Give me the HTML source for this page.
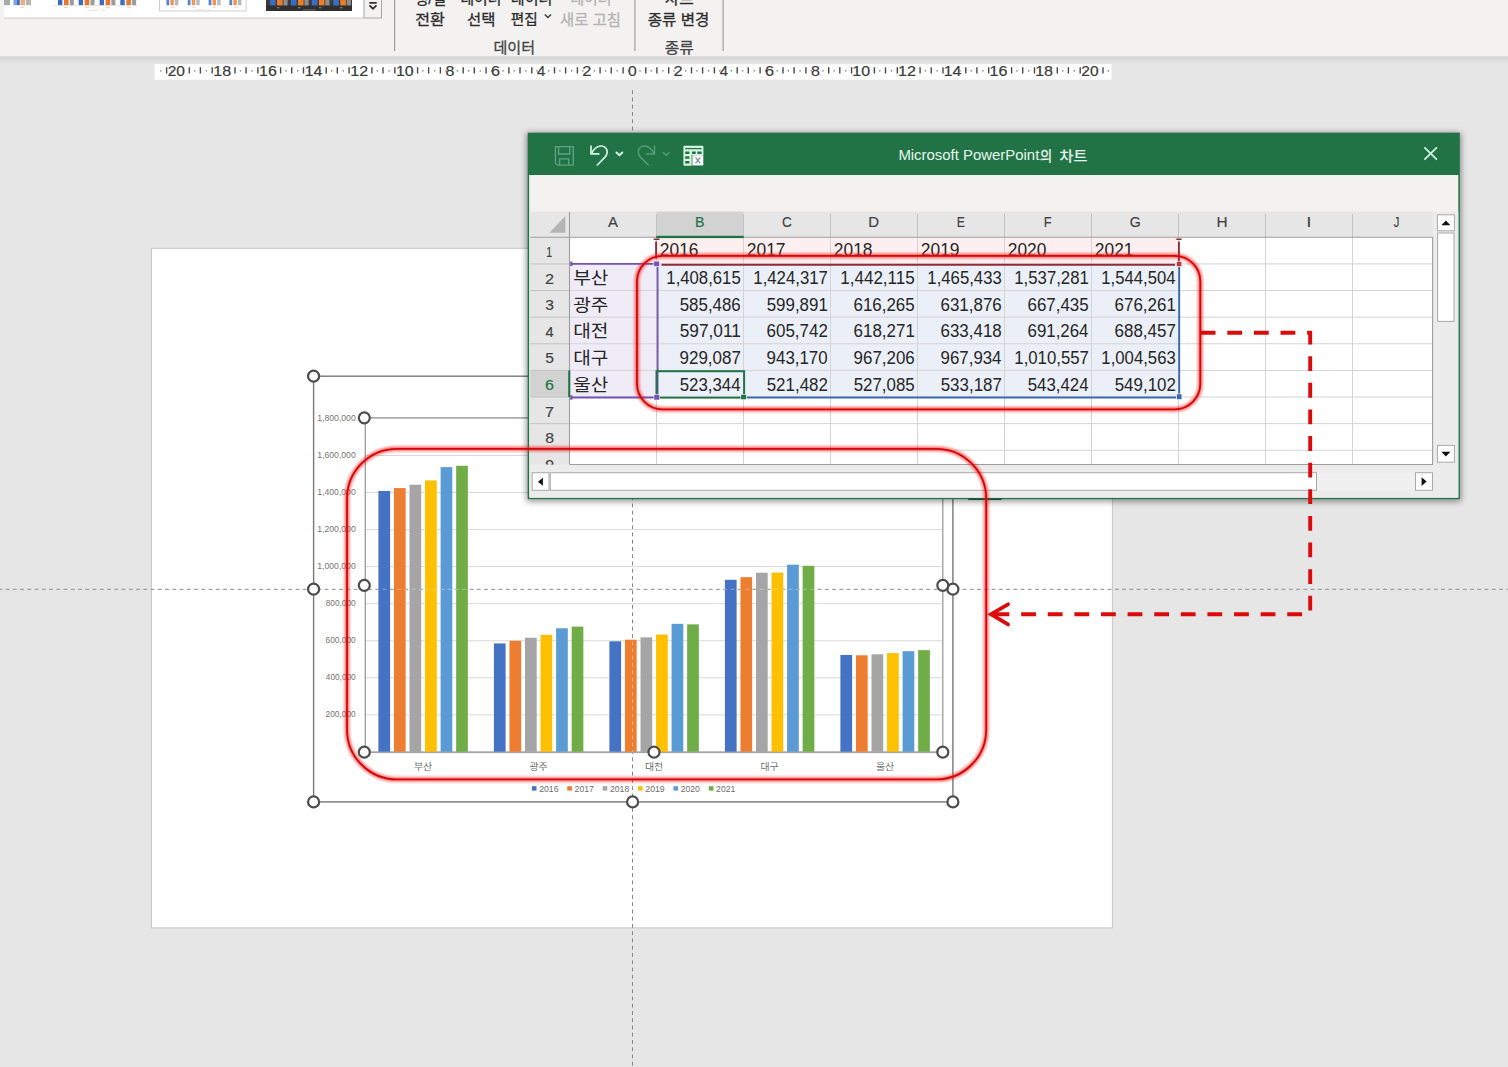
<!DOCTYPE html>
<html lang="ko"><head><meta charset="utf-8"><title>Microsoft PowerPoint의 차트</title>
<style>
html,body{margin:0;padding:0;background:#e6e6e6;}
body{width:1508px;height:1067px;overflow:hidden;font-family:"Liberation Sans","Noto Sans CJK KR",sans-serif;}
svg{display:block;font-family:"Liberation Sans","Noto Sans CJK KR",sans-serif;}
</style></head><body>
<svg width="1508" height="1067" viewBox="0 0 1508 1067">
<defs>
<linearGradient id="ribshadow" x1="0" y1="0" x2="0" y2="1"><stop offset="0" stop-color="#cfcfcf"/><stop offset="0.35" stop-color="#dadada"/><stop offset="1" stop-color="#e6e6e6"/></linearGradient>
<filter id="winshadow" x="-5%" y="-10%" width="110%" height="120%"><feGaussianBlur stdDeviation="3.2"/></filter>
<clipPath id="gridclip"><rect x="530" y="212" width="902.6" height="252.5"/></clipPath>
</defs>
<rect width="1508" height="1067" fill="#e6e6e6"/>
<g id="ribbon">
<rect x="0" y="56" width="1508" height="8" fill="url(#ribshadow)"/>
<rect x="0" y="0" width="1508" height="56.4" fill="#f3f2f1"/>
<rect x="4" y="-1" width="359.5" height="19" fill="#fff"/>
<rect x="4" y="17.6" width="359.5" height="1" fill="#c8c8c8"/>
<rect x="4" y="0" width="6.0" height="5.2" fill="#a9a9a9"/>
<rect x="13.5" y="0" width="3.5" height="5.2" fill="#7ba3dc"/>
<rect x="17" y="0" width="2.8" height="5.2" fill="#3d6cc0"/>
<rect x="20.5" y="0" width="4.5" height="5.2" fill="#f4a777"/>
<rect x="26" y="0" width="5.0" height="5.2" fill="#b5b5b5"/>
<rect x="20" y="7" width="4" height="1" fill="#eadbd1"/>
<rect x="58" y="0" width="4.4" height="5.2" fill="#3d6cc0"/>
<rect x="64" y="0" width="4.6" height="5.2" fill="#e8772a"/>
<rect x="69.8" y="0" width="4.0" height="5.2" fill="#9b9b9b"/>
<rect x="78.7" y="0" width="4.4" height="5.2" fill="#3d6cc0"/>
<rect x="84.7" y="0" width="4.6" height="5.2" fill="#e8772a"/>
<rect x="90.5" y="0" width="4.0" height="5.2" fill="#9b9b9b"/>
<rect x="99.6" y="0" width="4.4" height="5.2" fill="#3d6cc0"/>
<rect x="105.6" y="0" width="4.6" height="5.2" fill="#e8772a"/>
<rect x="111.39999999999999" y="0" width="4.0" height="5.2" fill="#9b9b9b"/>
<rect x="120.3" y="0" width="4.4" height="5.2" fill="#3d6cc0"/>
<rect x="126.3" y="0" width="4.6" height="5.2" fill="#e8772a"/>
<rect x="132.1" y="0" width="4.0" height="5.2" fill="#9b9b9b"/>
<rect x="53" y="5.2" width="85" height="0.6" fill="#d9d9d9"/>
<rect x="64" y="7" width="4" height="1.1" fill="#e6d9d0"/>
<rect x="85" y="7" width="4" height="1.1" fill="#e6d9d0"/>
<rect x="106" y="7" width="4" height="1.1" fill="#e6d9d0"/>
<rect x="127" y="7" width="4" height="1.1" fill="#e6d9d0"/>
<rect x="89" y="9.6" width="9" height="1" fill="#e0e0e0"/><rect x="101" y="9.6" width="4" height="1" fill="#efd8c8"/>
<rect x="159.5" y="-1" width="86.6" height="12" fill="#fff" stroke="#d0d0d0" stroke-width="1"/>
<rect x="166.4" y="0" width="2.8" height="5.2" fill="#5b84cc"/>
<rect x="170.4" y="0" width="3.4" height="5.2" fill="#ee9556"/>
<rect x="175.0" y="0" width="3.4" height="5.2" fill="#b9b9b9"/>
<rect x="187.7" y="0" width="2.8" height="5.2" fill="#5b84cc"/>
<rect x="191.7" y="0" width="3.4" height="5.2" fill="#ee9556"/>
<rect x="196.29999999999998" y="0" width="3.4" height="5.2" fill="#b9b9b9"/>
<rect x="208.6" y="0" width="2.8" height="5.2" fill="#5b84cc"/>
<rect x="212.6" y="0" width="3.4" height="5.2" fill="#ee9556"/>
<rect x="217.2" y="0" width="3.4" height="5.2" fill="#b9b9b9"/>
<rect x="229.4" y="0" width="2.8" height="5.2" fill="#5b84cc"/>
<rect x="233.4" y="0" width="3.4" height="5.2" fill="#ee9556"/>
<rect x="238.0" y="0" width="3.4" height="5.2" fill="#b9b9b9"/>
<rect x="171" y="7" width="3.5" height="1.1" fill="#ece2db"/>
<rect x="192" y="7" width="3.5" height="1.1" fill="#ece2db"/>
<rect x="213" y="7" width="3.5" height="1.1" fill="#ece2db"/>
<rect x="234" y="7" width="3.5" height="1.1" fill="#ece2db"/>
<rect x="195" y="9.4" width="9" height="1" fill="#e4e4e4"/><rect x="207" y="9.4" width="4" height="1" fill="#f0dccd"/>
<rect x="266" y="-1" width="86" height="12" fill="#303030"/>
<rect x="266" y="-1" width="86" height="6.4" fill="#3c3c3c"/>
<rect x="270" y="0" width="5.6" height="5.4" fill="#3a6dc4"/>
<rect x="277" y="0" width="5.6" height="5.4" fill="#ee7d26"/>
<rect x="283.4" y="0" width="4.2" height="5.4" fill="#8e8e8e"/>
<rect x="291" y="0" width="5.6" height="5.4" fill="#3a6dc4"/>
<rect x="298" y="0" width="5.6" height="5.4" fill="#ee7d26"/>
<rect x="304.4" y="0" width="4.2" height="5.4" fill="#8e8e8e"/>
<rect x="311.9" y="0" width="5.6" height="5.4" fill="#3a6dc4"/>
<rect x="318.9" y="0" width="5.6" height="5.4" fill="#ee7d26"/>
<rect x="325.29999999999995" y="0" width="4.2" height="5.4" fill="#8e8e8e"/>
<rect x="333.3" y="0" width="5.6" height="5.4" fill="#3a6dc4"/>
<rect x="340.3" y="0" width="5.6" height="5.4" fill="#ee7d26"/>
<rect x="346.7" y="0" width="4.2" height="5.4" fill="#8e8e8e"/>
<rect x="277" y="7.2" width="2.4" height="1.1" fill="#8c8c8c"/>
<rect x="298" y="7.2" width="2.4" height="1.1" fill="#8c8c8c"/>
<rect x="319" y="7.2" width="2.4" height="1.1" fill="#8c8c8c"/>
<rect x="340" y="7.2" width="2.4" height="1.1" fill="#8c8c8c"/>
<rect x="303" y="9.4" width="13" height="1" fill="#6a6a6a"/>
<rect x="364" y="-1" width="17.5" height="19" fill="#f3f2f1" stroke="#a8a8a8" stroke-width="1"/>
<path d="M369.3 2.9H376.7M369.5 5.3L373 8.7L376.5 5.3" fill="none" stroke="#333" stroke-width="1.8"/>
<rect x="394.0" y="0" width="1.2" height="51" fill="#9e9e9e"/>
<rect x="634.3" y="0" width="1.2" height="51" fill="#9e9e9e"/>
<rect x="722.5" y="0" width="1.2" height="51" fill="#9e9e9e"/>
<text x="414.6" y="4.4" font-size="14.5" fill="#2b2b2b" stroke="#2b2b2b" stroke-width="0.3" textLength="31.5" lengthAdjust="spacingAndGlyphs">행/열</text>
<text x="460.4" y="4.4" font-size="14.5" fill="#2b2b2b" stroke="#2b2b2b" stroke-width="0.3" textLength="41" lengthAdjust="spacingAndGlyphs">데이터</text>
<text x="510.8" y="4.4" font-size="14.7" fill="#2b2b2b" stroke="#2b2b2b" stroke-width="0.3" textLength="41.6" lengthAdjust="spacingAndGlyphs">데이터</text>
<text x="570.4" y="4.4" font-size="14.6" fill="#b4b3b2" stroke="#b4b3b2" stroke-width="0.3" textLength="41.2" lengthAdjust="spacingAndGlyphs">데이터</text>
<text x="664.8" y="4.4" font-size="14.7" fill="#2b2b2b" stroke="#2b2b2b" stroke-width="0.3" textLength="29" lengthAdjust="spacingAndGlyphs">차트</text>
<text x="415.3" y="24.6" font-size="14.7" fill="#2b2b2b" stroke="#2b2b2b" stroke-width="0.3" textLength="29.6" lengthAdjust="spacingAndGlyphs">전환</text>
<text x="467" y="24.6" font-size="14.7" fill="#2b2b2b" stroke="#2b2b2b" stroke-width="0.3" textLength="28.4" lengthAdjust="spacingAndGlyphs">선택</text>
<text x="510.8" y="24.4" font-size="14.2" fill="#2b2b2b" stroke="#2b2b2b" stroke-width="0.3" textLength="27" lengthAdjust="spacingAndGlyphs">편집</text>
<path d="M544.8 14.4L547.9 17.5L551 14.4" fill="none" stroke="#3b3b3b" stroke-width="1.4"/>
<text x="560" y="24.5" font-size="14.4" fill="#b4b3b2" stroke="#b4b3b2" stroke-width="0.3" textLength="61" lengthAdjust="spacingAndGlyphs">새로 고침</text>
<text x="647.8" y="24.5" font-size="14.6" fill="#2b2b2b" stroke="#2b2b2b" stroke-width="0.3" textLength="61.6" lengthAdjust="spacingAndGlyphs">종류 변경</text>
<text x="493.5" y="53.4" font-size="14.7" fill="#444" stroke="#444" stroke-width="0.3" textLength="41.6" lengthAdjust="spacingAndGlyphs">데이터</text>
<text x="664.8" y="53.3" font-size="14.6" fill="#444" stroke="#444" stroke-width="0.3" textLength="29" lengthAdjust="spacingAndGlyphs">종류</text>
</g>
<g id="ruler">
<rect x="154.6" y="64.2" width="956.9" height="15.5" fill="#fff"/>
<path d="M166.6 67.2V73.6M189.3 67.2V73.6M200.4 67.2V73.6M212.2 67.2V73.6M235.0 67.2V73.6M246.1 67.2V73.6M257.9 67.2V73.6M280.6 67.2V73.6M291.7 67.2V73.6M303.5 67.2V73.6M326.2 67.2V73.6M337.3 67.2V73.6M349.1 67.2V73.6M371.9 67.2V73.6M383.0 67.2V73.6M394.8 67.2V73.6M417.6 67.2V73.6M428.6 67.2V73.6M440.4 67.2V73.6M463.2 67.2V73.6M474.3 67.2V73.6M486.1 67.2V73.6M508.9 67.2V73.6M520.0 67.2V73.6M531.8 67.2V73.6M554.5 67.2V73.6M565.6 67.2V73.6M577.4 67.2V73.6M600.1 67.2V73.6M611.2 67.2V73.6M623.1 67.2V73.6M645.8 67.2V73.6M656.9 67.2V73.6M668.7 67.2V73.6M691.5 67.2V73.6M702.6 67.2V73.6M714.4 67.2V73.6M737.2 67.2V73.6M748.3 67.2V73.6M760.1 67.2V73.6M783.0 67.2V73.6M794.1 67.2V73.6M805.9 67.2V73.6M828.7 67.2V73.6M839.8 67.2V73.6M851.6 67.2V73.6M874.4 67.2V73.6M885.5 67.2V73.6M897.3 67.2V73.6M920.1 67.2V73.6M931.2 67.2V73.6M943.0 67.2V73.6M965.8 67.2V73.6M976.9 67.2V73.6M988.7 67.2V73.6M1011.6 67.2V73.6M1022.7 67.2V73.6M1034.5 67.2V73.6M1057.3 67.2V73.6M1068.4 67.2V73.6M1080.2 67.2V73.6M1103.0 67.2V73.6" stroke="#4a4a4a" stroke-width="1.4" fill="none"/>
<path d="M160.8 70.2V71.6M172.0 70.2V71.6M183.5 70.2V71.6M194.7 70.2V71.6M206.4 70.2V71.6M217.6 70.2V71.6M229.2 70.2V71.6M240.4 70.2V71.6M252.1 70.2V71.6M263.3 70.2V71.6M274.8 70.2V71.6M286.0 70.2V71.6M297.7 70.2V71.6M308.9 70.2V71.6M320.4 70.2V71.6M331.6 70.2V71.6M343.3 70.2V71.6M354.6 70.2V71.6M366.1 70.2V71.6M377.3 70.2V71.6M389.0 70.2V71.6M400.2 70.2V71.6M411.8 70.2V71.6M422.9 70.2V71.6M434.6 70.2V71.6M445.9 70.2V71.6M457.4 70.2V71.6M468.6 70.2V71.6M480.3 70.2V71.6M491.5 70.2V71.6M503.1 70.2V71.6M514.2 70.2V71.6M526.0 70.2V71.6M537.1 70.2V71.6M548.7 70.2V71.6M559.9 70.2V71.6M571.6 70.2V71.6M582.8 70.2V71.6M594.4 70.2V71.6M605.6 70.2V71.6M617.2 70.2V71.6M628.5 70.2V71.6M640.0 70.2V71.6M651.2 70.2V71.6M662.9 70.2V71.6M674.1 70.2V71.6M685.7 70.2V71.6M696.9 70.2V71.6M708.6 70.2V71.6M719.8 70.2V71.6M731.4 70.2V71.6M742.6 70.2V71.6M754.3 70.2V71.6M765.5 70.2V71.6M777.2 70.2V71.6M788.4 70.2V71.6M800.1 70.2V71.6M811.3 70.2V71.6M822.9 70.2V71.6M834.1 70.2V71.6M845.8 70.2V71.6M857.0 70.2V71.6M868.6 70.2V71.6M879.8 70.2V71.6M891.5 70.2V71.6M902.7 70.2V71.6M914.3 70.2V71.6M925.5 70.2V71.6M937.2 70.2V71.6M948.4 70.2V71.6M960.0 70.2V71.6M971.2 70.2V71.6M982.9 70.2V71.6M994.1 70.2V71.6M1005.8 70.2V71.6M1017.0 70.2V71.6M1028.7 70.2V71.6M1039.9 70.2V71.6M1051.5 70.2V71.6M1062.7 70.2V71.6M1074.4 70.2V71.6M1085.6 70.2V71.6M1097.2 70.2V71.6M1108.4 70.2V71.6" stroke="#6a6a6a" stroke-width="1.3" fill="none"/>
<text x="167.67" y="76.00" font-size="15.3" fill="#3c3c3c" textLength="17.29" lengthAdjust="spacingAndGlyphs" stroke="#3c3c3c" stroke-width="0.2">20</text>
<text x="213.38" y="76.00" font-size="15.3" fill="#3c3c3c" textLength="17.82" lengthAdjust="spacingAndGlyphs" stroke="#3c3c3c" stroke-width="0.2">18</text>
<text x="259.03" y="76.00" font-size="15.3" fill="#3c3c3c" textLength="17.82" lengthAdjust="spacingAndGlyphs" stroke="#3c3c3c" stroke-width="0.2">16</text>
<text x="304.70" y="76.00" font-size="15.3" fill="#3c3c3c" textLength="17.57" lengthAdjust="spacingAndGlyphs" stroke="#3c3c3c" stroke-width="0.2">14</text>
<text x="350.32" y="76.00" font-size="15.3" fill="#3c3c3c" textLength="17.94" lengthAdjust="spacingAndGlyphs" stroke="#3c3c3c" stroke-width="0.2">12</text>
<text x="395.99" y="76.00" font-size="15.3" fill="#3c3c3c" textLength="17.74" lengthAdjust="spacingAndGlyphs" stroke="#3c3c3c" stroke-width="0.2">10</text>
<text x="445.46" y="76.00" font-size="15.3" fill="#3c3c3c" textLength="8.89" lengthAdjust="spacingAndGlyphs" stroke="#3c3c3c" stroke-width="0.2">8</text>
<text x="490.97" y="76.00" font-size="15.3" fill="#3c3c3c" textLength="9.04" lengthAdjust="spacingAndGlyphs" stroke="#3c3c3c" stroke-width="0.2">6</text>
<text x="537.11" y="76.00" font-size="15.3" fill="#3c3c3c" textLength="8.28" lengthAdjust="spacingAndGlyphs" stroke="#3c3c3c" stroke-width="0.2">4</text>
<text x="582.27" y="76.00" font-size="15.3" fill="#3c3c3c" textLength="9.16" lengthAdjust="spacingAndGlyphs" stroke="#3c3c3c" stroke-width="0.2">2</text>
<text x="628.14" y="76.00" font-size="15.3" fill="#3c3c3c" textLength="8.73" lengthAdjust="spacingAndGlyphs" stroke="#3c3c3c" stroke-width="0.2">0</text>
<text x="673.64" y="76.00" font-size="15.3" fill="#3c3c3c" textLength="9.16" lengthAdjust="spacingAndGlyphs" stroke="#3c3c3c" stroke-width="0.2">2</text>
<text x="719.85" y="76.00" font-size="15.3" fill="#3c3c3c" textLength="8.28" lengthAdjust="spacingAndGlyphs" stroke="#3c3c3c" stroke-width="0.2">4</text>
<text x="765.08" y="76.00" font-size="15.3" fill="#3c3c3c" textLength="9.04" lengthAdjust="spacingAndGlyphs" stroke="#3c3c3c" stroke-width="0.2">6</text>
<text x="810.94" y="76.00" font-size="15.3" fill="#3c3c3c" textLength="8.89" lengthAdjust="spacingAndGlyphs" stroke="#3c3c3c" stroke-width="0.2">8</text>
<text x="852.34" y="76.00" font-size="15.3" fill="#3c3c3c" textLength="17.74" lengthAdjust="spacingAndGlyphs" stroke="#3c3c3c" stroke-width="0.2">10</text>
<text x="898.04" y="76.00" font-size="15.3" fill="#3c3c3c" textLength="17.94" lengthAdjust="spacingAndGlyphs" stroke="#3c3c3c" stroke-width="0.2">12</text>
<text x="943.79" y="76.00" font-size="15.3" fill="#3c3c3c" textLength="17.57" lengthAdjust="spacingAndGlyphs" stroke="#3c3c3c" stroke-width="0.2">14</text>
<text x="989.49" y="76.00" font-size="15.3" fill="#3c3c3c" textLength="17.82" lengthAdjust="spacingAndGlyphs" stroke="#3c3c3c" stroke-width="0.2">16</text>
<text x="1035.21" y="76.00" font-size="15.3" fill="#3c3c3c" textLength="17.82" lengthAdjust="spacingAndGlyphs" stroke="#3c3c3c" stroke-width="0.2">18</text>
<text x="1081.37" y="76.00" font-size="15.3" fill="#3c3c3c" textLength="17.29" lengthAdjust="spacingAndGlyphs" stroke="#3c3c3c" stroke-width="0.2">20</text>
</g>
<rect x="151.4" y="248.3" width="961" height="679.6" fill="#fff" stroke="#c6c6c6" stroke-width="1"/>
<g id="chart">
<path d="M365.3 714.85H942.8M365.3 677.80H942.8M365.3 640.75H942.8M365.3 603.70H942.8M365.3 566.65H942.8M365.3 529.60H942.8M365.3 492.55H942.8M365.3 455.50H942.8M365.3 418.45H942.8" stroke="#d9d9d9" stroke-width="1" fill="none"/>
<path d="M632.5 90.3V1067" stroke="#858585" stroke-width="1" stroke-dasharray="3.75 3.5" fill="none"/>
<path d="M-1.65 589.3H1508" stroke="#8e8e8e" stroke-width="1" stroke-dasharray="3.85 3.4" fill="none"/>
<path d="M365.3 751.9H942.8" stroke="#bfbfbf" stroke-width="1.2" fill="none"/>
<rect x="378.40" y="490.95" width="11.7" height="260.95" fill="#4472c4"/>
<rect x="393.95" y="488.05" width="11.7" height="263.85" fill="#ed7d31"/>
<rect x="409.50" y="484.75" width="11.7" height="267.15" fill="#a5a5a5"/>
<rect x="425.05" y="480.43" width="11.7" height="271.47" fill="#ffc000"/>
<rect x="440.60" y="467.12" width="11.7" height="284.78" fill="#5b9bd5"/>
<rect x="456.15" y="465.78" width="11.7" height="286.12" fill="#70ad47"/>
<text x="413.9" y="770" font-size="9.4" fill="#707070" textLength="18.3" lengthAdjust="spacingAndGlyphs">부산</text>
<rect x="493.90" y="643.44" width="11.7" height="108.46" fill="#4472c4"/>
<rect x="509.45" y="640.77" width="11.7" height="111.13" fill="#ed7d31"/>
<rect x="525.00" y="637.74" width="11.7" height="114.16" fill="#a5a5a5"/>
<rect x="540.55" y="634.84" width="11.7" height="117.06" fill="#ffc000"/>
<rect x="556.10" y="628.26" width="11.7" height="123.64" fill="#5b9bd5"/>
<rect x="571.65" y="626.62" width="11.7" height="125.28" fill="#70ad47"/>
<text x="529.4" y="770" font-size="9.4" fill="#707070" textLength="18.3" lengthAdjust="spacingAndGlyphs">광주</text>
<rect x="609.40" y="641.30" width="11.7" height="110.60" fill="#4472c4"/>
<rect x="624.95" y="639.69" width="11.7" height="112.21" fill="#ed7d31"/>
<rect x="640.50" y="637.37" width="11.7" height="114.53" fill="#a5a5a5"/>
<rect x="656.05" y="634.56" width="11.7" height="117.34" fill="#ffc000"/>
<rect x="671.60" y="623.84" width="11.7" height="128.06" fill="#5b9bd5"/>
<rect x="687.15" y="624.36" width="11.7" height="127.54" fill="#70ad47"/>
<text x="644.9" y="770" font-size="9.4" fill="#707070" textLength="18.3" lengthAdjust="spacingAndGlyphs">대전</text>
<rect x="724.90" y="579.79" width="11.7" height="172.11" fill="#4472c4"/>
<rect x="740.45" y="577.18" width="11.7" height="174.72" fill="#ed7d31"/>
<rect x="756.00" y="572.73" width="11.7" height="179.17" fill="#a5a5a5"/>
<rect x="771.55" y="572.59" width="11.7" height="179.31" fill="#ffc000"/>
<rect x="787.10" y="564.69" width="11.7" height="187.21" fill="#5b9bd5"/>
<rect x="802.65" y="565.80" width="11.7" height="186.10" fill="#70ad47"/>
<text x="760.4" y="770" font-size="9.4" fill="#707070" textLength="18.3" lengthAdjust="spacingAndGlyphs">대구</text>
<rect x="840.40" y="654.95" width="11.7" height="96.95" fill="#4472c4"/>
<rect x="855.95" y="655.30" width="11.7" height="96.60" fill="#ed7d31"/>
<rect x="871.50" y="654.26" width="11.7" height="97.64" fill="#a5a5a5"/>
<rect x="887.05" y="653.13" width="11.7" height="98.77" fill="#ffc000"/>
<rect x="902.60" y="651.23" width="11.7" height="100.67" fill="#5b9bd5"/>
<rect x="918.15" y="650.18" width="11.7" height="101.72" fill="#70ad47"/>
<text x="875.9" y="770" font-size="9.4" fill="#707070" textLength="18.3" lengthAdjust="spacingAndGlyphs">울산</text>
<clipPath id="barclip"><rect x="378.40" y="490.95" width="11.7" height="260.95"/><rect x="393.95" y="488.05" width="11.7" height="263.85"/><rect x="409.50" y="484.75" width="11.7" height="267.15"/><rect x="425.05" y="480.43" width="11.7" height="271.47"/><rect x="440.60" y="467.12" width="11.7" height="284.78"/><rect x="456.15" y="465.78" width="11.7" height="286.12"/><rect x="493.90" y="643.44" width="11.7" height="108.46"/><rect x="509.45" y="640.77" width="11.7" height="111.13"/><rect x="525.00" y="637.74" width="11.7" height="114.16"/><rect x="540.55" y="634.84" width="11.7" height="117.06"/><rect x="556.10" y="628.26" width="11.7" height="123.64"/><rect x="571.65" y="626.62" width="11.7" height="125.28"/><rect x="609.40" y="641.30" width="11.7" height="110.60"/><rect x="624.95" y="639.69" width="11.7" height="112.21"/><rect x="640.50" y="637.37" width="11.7" height="114.53"/><rect x="656.05" y="634.56" width="11.7" height="117.34"/><rect x="671.60" y="623.84" width="11.7" height="128.06"/><rect x="687.15" y="624.36" width="11.7" height="127.54"/><rect x="724.90" y="579.79" width="11.7" height="172.11"/><rect x="740.45" y="577.18" width="11.7" height="174.72"/><rect x="756.00" y="572.73" width="11.7" height="179.17"/><rect x="771.55" y="572.59" width="11.7" height="179.31"/><rect x="787.10" y="564.69" width="11.7" height="187.21"/><rect x="802.65" y="565.80" width="11.7" height="186.10"/><rect x="840.40" y="654.95" width="11.7" height="96.95"/><rect x="855.95" y="655.30" width="11.7" height="96.60"/><rect x="871.50" y="654.26" width="11.7" height="97.64"/><rect x="887.05" y="653.13" width="11.7" height="98.77"/><rect x="902.60" y="651.23" width="11.7" height="100.67"/><rect x="918.15" y="650.18" width="11.7" height="101.72"/></clipPath>
<g clip-path="url(#barclip)" opacity="0.4" stroke="#f4f4f4" stroke-width="1" fill="none"><path d="M632.5 90.3V1067" stroke-dasharray="3.75 3.5"/><path d="M-1.65 589.3H1508" stroke-dasharray="3.85 3.4"/></g>
<text x="325.58" y="717.35" font-size="8.9" fill="#767676" textLength="30.15" lengthAdjust="spacingAndGlyphs">200,000</text>
<text x="325.81" y="680.30" font-size="8.9" fill="#767676" textLength="29.91" lengthAdjust="spacingAndGlyphs">400,000</text>
<text x="325.58" y="643.25" font-size="8.9" fill="#767676" textLength="30.15" lengthAdjust="spacingAndGlyphs">600,000</text>
<text x="325.64" y="606.20" font-size="8.9" fill="#767676" textLength="30.09" lengthAdjust="spacingAndGlyphs">800,000</text>
<text x="317.34" y="569.15" font-size="8.9" fill="#767676" textLength="38.39" lengthAdjust="spacingAndGlyphs">1,000,000</text>
<text x="317.34" y="532.10" font-size="8.9" fill="#767676" textLength="38.39" lengthAdjust="spacingAndGlyphs">1,200,000</text>
<text x="317.34" y="495.05" font-size="8.9" fill="#767676" textLength="38.39" lengthAdjust="spacingAndGlyphs">1,400,000</text>
<text x="317.34" y="458.00" font-size="8.9" fill="#767676" textLength="38.39" lengthAdjust="spacingAndGlyphs">1,600,000</text>
<text x="317.34" y="420.95" font-size="8.9" fill="#767676" textLength="38.39" lengthAdjust="spacingAndGlyphs">1,800,000</text>
<rect x="531.90" y="786.2" width="4.6" height="4.4" fill="#4472c4"/>
<text x="539.16" y="791.90" font-size="9.1" fill="#6e6e6e" textLength="19.32" lengthAdjust="spacingAndGlyphs">2016</text>
<rect x="567.28" y="786.2" width="4.6" height="4.4" fill="#ed7d31"/>
<text x="574.54" y="791.90" font-size="9.1" fill="#6e6e6e" textLength="19.38" lengthAdjust="spacingAndGlyphs">2017</text>
<rect x="602.66" y="786.2" width="4.6" height="4.4" fill="#a5a5a5"/>
<text x="609.92" y="791.90" font-size="9.1" fill="#6e6e6e" textLength="19.31" lengthAdjust="spacingAndGlyphs">2018</text>
<rect x="638.04" y="786.2" width="4.6" height="4.4" fill="#ffc000"/>
<text x="645.30" y="791.90" font-size="9.1" fill="#6e6e6e" textLength="19.35" lengthAdjust="spacingAndGlyphs">2019</text>
<rect x="673.42" y="786.2" width="4.6" height="4.4" fill="#5b9bd5"/>
<text x="680.68" y="791.90" font-size="9.1" fill="#6e6e6e" textLength="19.27" lengthAdjust="spacingAndGlyphs">2020</text>
<rect x="708.80" y="786.2" width="4.6" height="4.4" fill="#70ad47"/>
<text x="716.06" y="791.90" font-size="9.1" fill="#6e6e6e" textLength="19.36" lengthAdjust="spacingAndGlyphs">2021</text>
<rect x="365.3" y="417.8" width="577.5" height="334.6" fill="none" stroke="#a3a3a3" stroke-width="1.4"/>
<rect x="313.6" y="376.2" width="639.3" height="425.7" fill="none" stroke="#787878" stroke-width="1.4"/>
<circle cx="313.6" cy="376.2" r="5.5" fill="#fff" stroke="#4c4c4c" stroke-width="2.2"/>
<circle cx="633.2" cy="376.2" r="5.5" fill="#fff" stroke="#4c4c4c" stroke-width="2.2"/>
<circle cx="952.9" cy="376.2" r="5.5" fill="#fff" stroke="#4c4c4c" stroke-width="2.2"/>
<circle cx="313.6" cy="589.2" r="5.5" fill="#fff" stroke="#4c4c4c" stroke-width="2.2"/>
<circle cx="952.9" cy="589.2" r="5.5" fill="#fff" stroke="#4c4c4c" stroke-width="2.2"/>
<circle cx="313.6" cy="801.9" r="5.5" fill="#fff" stroke="#4c4c4c" stroke-width="2.2"/>
<circle cx="632.6" cy="801.9" r="5.5" fill="#fff" stroke="#4c4c4c" stroke-width="2.2"/>
<circle cx="952.9" cy="801.9" r="5.5" fill="#fff" stroke="#4c4c4c" stroke-width="2.2"/>
<circle cx="364.3" cy="417.8" r="5.5" fill="#fff" stroke="#4c4c4c" stroke-width="2.2"/>
<circle cx="654" cy="417.8" r="5.5" fill="#fff" stroke="#4c4c4c" stroke-width="2.2"/>
<circle cx="942.8" cy="417.8" r="5.5" fill="#fff" stroke="#4c4c4c" stroke-width="2.2"/>
<circle cx="364.3" cy="585.3" r="5.5" fill="#fff" stroke="#4c4c4c" stroke-width="2.2"/>
<circle cx="942.8" cy="585.3" r="5.5" fill="#fff" stroke="#4c4c4c" stroke-width="2.2"/>
<circle cx="364.3" cy="752.2" r="5.5" fill="#fff" stroke="#4c4c4c" stroke-width="2.2"/>
<circle cx="654" cy="752.2" r="5.5" fill="#fff" stroke="#4c4c4c" stroke-width="2.2"/>
<circle cx="942.8" cy="752.2" r="5.5" fill="#fff" stroke="#4c4c4c" stroke-width="2.2"/>
</g>
<g id="excel">
<rect x="526.5" y="133" width="934.5" height="368.5" fill="#000" opacity="0.42" filter="url(#winshadow)"/>
<rect x="527.7" y="132.7" width="932.1" height="366.4" fill="#217346"/>
<rect x="968.3" y="498.5" width="33.2" height="1.5" fill="#1c4a33"/>
<rect x="529.3" y="175" width="929" height="322.7" fill="#f3f2f1"/>
<rect x="529.3" y="175" width="1.2" height="322.7" fill="#e4efe8"/>
<rect x="530.2" y="211.7" width="928.1" height="286" fill="#ececec"/>
<rect x="530.2" y="211.7" width="902.4" height="25.6" fill="#e6e6e6"/>
<rect x="530.2" y="237.3" width="39.3" height="227.2" fill="#e6e6e6"/>
<g fill="none" stroke="#5fa481" stroke-width="1.3"><path d="M555.4 146.7H573.3V165.1H557.6L555.4 162.9Z"/><path d="M558.6 146.7V154H569.8V146.7"/><path d="M559.6 165.1V158.8H568.7V165.1"/></g>
<g fill="none" stroke="#d6f5e3" stroke-width="1.7" stroke-linecap="round" stroke-linejoin="round"><path d="M591 146.2V153.9H598.8"/><path d="M591.6 153.3C594 148.6 598 145.8 601.6 146C605.4 146.3 607.6 149.4 607.2 152.6C606.9 154.8 605.7 156.5 604.3 157.9L597.3 165"/><path d="M616.5 152.5L619.4 155.2L622.3 152.5" stroke-width="2"/></g>
<g fill="none" stroke="#5fa481" stroke-width="1.5" stroke-linecap="round" stroke-linejoin="round" opacity="0.85"><path d="M654.5 146.2V153.9H646.7"/><path d="M653.9 153.3C651.5 148.6 647.5 145.8 643.9 146C640.1 146.3 637.9 149.4 638.3 152.6C638.6 154.8 639.8 156.5 641.2 157.9L648.2 165"/><path d="M663.3 152.8L666.2 155.3L669.1 152.8"/></g>
<rect x="683.4" y="145.8" width="20" height="19.9" rx="1" fill="#d6f5e3"/>
<path d="M685.2 148.6H701.6" stroke="#217346" stroke-width="1.3"/>
<path d="M685.2 151.4h4.2v2.5h-4.2zM685.2 156.2h4.2v2.5h-4.2zM685.2 161.0h4.2v2.5h-4.2zM692 151.4h3.7v2.5h-3.7zM697.4 151.4h4.2v2.5h-4.2z" fill="#217346"/>
<rect x="691.6" y="155" width="12" height="10.9" fill="#217346"/>
<rect x="692.4" y="155.2" width="10.8" height="10.2" fill="#fff"/>
<path d="M695.5 157.4L700.3 163.4M700.3 157.4L695.5 163.4" stroke="#6f9581" stroke-width="1.2" fill="none"/>
<text x="898.38" y="160.30" font-size="15.2" fill="#e6f7ee" textLength="140.93" lengthAdjust="spacingAndGlyphs">Microsoft PowerPoint</text>
<text x="1039.9" y="161.2" font-size="14" fill="#e6f7ee" stroke="#e6f7ee" stroke-width="0.3" textLength="12.2" lengthAdjust="spacingAndGlyphs">의</text>
<text x="1059.6" y="161.2" font-size="14" fill="#e6f7ee" stroke="#e6f7ee" stroke-width="0.3" textLength="27.6" lengthAdjust="spacingAndGlyphs">차트</text>
<path d="M1424.4 147.3L1436.9 159.7M1436.9 147.3L1424.4 159.7" stroke="#d6f5e3" stroke-width="1.7" fill="none"/>
<rect x="569.5" y="237.3" width="863.1" height="227.2" fill="#fff"/>
<rect x="656.5" y="237.3" width="522.0" height="26.62" fill="#fdefef"/>
<rect x="569.5" y="263.92" width="87.0" height="133.1" fill="#efecf7"/>
<rect x="656.5" y="263.92" width="522.0" height="133.1" fill="#ebeff8"/>
<rect x="656.5" y="211.7" width="87.0" height="25.6" fill="#d2d2d2"/>
<rect x="530.2" y="370.4" width="39.3" height="26.62" fill="#d2d2d2"/>
<path d="M569.5 263.92H1432.6M569.5 290.54H1432.6M569.5 317.16H1432.6M569.5 343.78H1432.6M569.5 370.40H1432.6M569.5 397.02H1432.6M569.5 423.64H1432.6M569.5 450.26H1432.6M656.50 237.3V464.5M743.50 237.3V464.5M830.50 237.3V464.5M917.50 237.3V464.5M1004.50 237.3V464.5M1091.50 237.3V464.5M1178.50 237.3V464.5M1265.50 237.3V464.5M1352.50 237.3V464.5" stroke="#d4d4d4" stroke-width="1" fill="none"/>
<path d="M530.2 263.92H569.5M530.2 290.54H569.5M530.2 317.16H569.5M530.2 343.78H569.5M530.2 370.40H569.5M530.2 397.02H569.5M530.2 423.64H569.5M530.2 450.26H569.5M656.50 214V237.3M743.50 214V237.3M830.50 214V237.3M917.50 214V237.3M1004.50 214V237.3M1091.50 214V237.3M1178.50 214V237.3M1265.50 214V237.3M1352.50 214V237.3" stroke="#c3c3c3" stroke-width="1" fill="none"/>
<path d="M530.2 237.3H1432.6M569.5 211.7V464.5M569.5 464.5H1432.6V237.3" stroke="#9e9e9e" stroke-width="1.1" fill="none"/>
<path d="M565.3 215.9V232.8H549.5Z" fill="#b4b4b4"/>
<text x="608.02" y="226.90" font-size="15.3" fill="#404040" textLength="9.96" lengthAdjust="spacingAndGlyphs" stroke="#404040" stroke-width="0.15">A</text>
<text x="695.03" y="226.90" font-size="15.3" fill="#217346" textLength="9.52" lengthAdjust="spacingAndGlyphs" stroke="#217346" stroke-width="0.15">B</text>
<text x="782.01" y="226.90" font-size="15.3" fill="#404040" textLength="9.81" lengthAdjust="spacingAndGlyphs" stroke="#404040" stroke-width="0.15">C</text>
<text x="868.32" y="226.90" font-size="15.3" fill="#404040" textLength="10.85" lengthAdjust="spacingAndGlyphs" stroke="#404040" stroke-width="0.15">D</text>
<text x="956.70" y="226.90" font-size="15.3" fill="#404040" textLength="8.12" lengthAdjust="spacingAndGlyphs" stroke="#404040" stroke-width="0.15">E</text>
<text x="1043.79" y="226.90" font-size="15.3" fill="#404040" textLength="7.87" lengthAdjust="spacingAndGlyphs" stroke="#404040" stroke-width="0.15">F</text>
<text x="1129.69" y="226.90" font-size="15.3" fill="#404040" textLength="10.96" lengthAdjust="spacingAndGlyphs" stroke="#404040" stroke-width="0.15">G</text>
<text x="1216.44" y="226.90" font-size="15.3" fill="#404040" textLength="11.12" lengthAdjust="spacingAndGlyphs" stroke="#404040" stroke-width="0.15">H</text>
<text x="1306.62" y="226.90" font-size="15.3" fill="#404040" textLength="4.77" lengthAdjust="spacingAndGlyphs" stroke="#404040" stroke-width="0.15">I</text>
<text x="1393.72" y="226.90" font-size="15.3" fill="#404040" textLength="5.61" lengthAdjust="spacingAndGlyphs" stroke="#404040" stroke-width="0.15">J</text>
<g clip-path="url(#gridclip)">
<text x="546.29" y="256.90" font-size="15.3" fill="#404040" textLength="5.93" lengthAdjust="spacingAndGlyphs" stroke="#404040" stroke-width="0.15">1</text>
<text x="545.08" y="283.52" font-size="15.3" fill="#404040" textLength="9.03" lengthAdjust="spacingAndGlyphs" stroke="#404040" stroke-width="0.15">2</text>
<text x="545.31" y="310.14" font-size="15.3" fill="#404040" textLength="8.68" lengthAdjust="spacingAndGlyphs" stroke="#404040" stroke-width="0.15">3</text>
<text x="545.56" y="336.76" font-size="15.3" fill="#404040" textLength="8.17" lengthAdjust="spacingAndGlyphs" stroke="#404040" stroke-width="0.15">4</text>
<text x="545.28" y="363.38" font-size="15.3" fill="#404040" textLength="8.68" lengthAdjust="spacingAndGlyphs" stroke="#404040" stroke-width="0.15">5</text>
<text x="545.09" y="390.00" font-size="15.3" fill="#217346" textLength="8.92" lengthAdjust="spacingAndGlyphs" stroke="#217346" stroke-width="0.15">6</text>
<text x="545.07" y="416.62" font-size="15.3" fill="#404040" textLength="9.05" lengthAdjust="spacingAndGlyphs" stroke="#404040" stroke-width="0.15">7</text>
<text x="545.21" y="443.24" font-size="15.3" fill="#404040" textLength="8.77" lengthAdjust="spacingAndGlyphs" stroke="#404040" stroke-width="0.15">8</text>
<text x="545.15" y="469.86" font-size="15.3" fill="#404040" textLength="8.91" lengthAdjust="spacingAndGlyphs" stroke="#404040" stroke-width="0.15">9</text>
</g>
<text x="659.83" y="256.20" font-size="17.6" fill="#262626" textLength="38.64" lengthAdjust="spacingAndGlyphs">2016</text>
<text x="746.82" y="256.20" font-size="17.6" fill="#262626" textLength="38.75" lengthAdjust="spacingAndGlyphs">2017</text>
<text x="833.83" y="256.20" font-size="17.6" fill="#262626" textLength="38.63" lengthAdjust="spacingAndGlyphs">2018</text>
<text x="920.83" y="256.20" font-size="17.6" fill="#262626" textLength="38.70" lengthAdjust="spacingAndGlyphs">2019</text>
<text x="1007.83" y="256.20" font-size="17.6" fill="#262626" textLength="38.55" lengthAdjust="spacingAndGlyphs">2020</text>
<text x="1094.82" y="256.20" font-size="17.6" fill="#262626" textLength="38.73" lengthAdjust="spacingAndGlyphs">2021</text>
<text x="573.2" y="284.12" font-size="17.6" fill="#262626" textLength="35.2" lengthAdjust="spacingAndGlyphs">부산</text>
<text x="666.33" y="284.12" font-size="17.6" fill="#262626" textLength="74.38" lengthAdjust="spacingAndGlyphs">1,408,615</text>
<text x="753.32" y="284.12" font-size="17.6" fill="#262626" textLength="74.52" lengthAdjust="spacingAndGlyphs">1,424,317</text>
<text x="840.33" y="284.12" font-size="17.6" fill="#262626" textLength="74.38" lengthAdjust="spacingAndGlyphs">1,442,115</text>
<text x="927.33" y="284.12" font-size="17.6" fill="#262626" textLength="74.41" lengthAdjust="spacingAndGlyphs">1,465,433</text>
<text x="1014.32" y="284.12" font-size="17.6" fill="#262626" textLength="74.49" lengthAdjust="spacingAndGlyphs">1,537,281</text>
<text x="1101.33" y="284.12" font-size="17.6" fill="#262626" textLength="74.16" lengthAdjust="spacingAndGlyphs">1,544,504</text>
<text x="573.2" y="310.74" font-size="17.6" fill="#262626" textLength="35.2" lengthAdjust="spacingAndGlyphs">광주</text>
<text x="679.72" y="310.74" font-size="17.6" fill="#262626" textLength="61.02" lengthAdjust="spacingAndGlyphs">585,486</text>
<text x="766.72" y="310.74" font-size="17.6" fill="#262626" textLength="61.10" lengthAdjust="spacingAndGlyphs">599,891</text>
<text x="853.54" y="310.74" font-size="17.6" fill="#262626" textLength="61.17" lengthAdjust="spacingAndGlyphs">616,265</text>
<text x="940.54" y="310.74" font-size="17.6" fill="#262626" textLength="61.20" lengthAdjust="spacingAndGlyphs">631,876</text>
<text x="1027.54" y="310.74" font-size="17.6" fill="#262626" textLength="61.17" lengthAdjust="spacingAndGlyphs">667,435</text>
<text x="1114.54" y="310.74" font-size="17.6" fill="#262626" textLength="61.29" lengthAdjust="spacingAndGlyphs">676,261</text>
<text x="573.2" y="337.36" font-size="17.6" fill="#262626" textLength="35.2" lengthAdjust="spacingAndGlyphs">대전</text>
<text x="679.72" y="337.36" font-size="17.6" fill="#262626" textLength="61.10" lengthAdjust="spacingAndGlyphs">597,011</text>
<text x="766.54" y="337.36" font-size="17.6" fill="#262626" textLength="61.31" lengthAdjust="spacingAndGlyphs">605,742</text>
<text x="853.54" y="337.36" font-size="17.6" fill="#262626" textLength="61.29" lengthAdjust="spacingAndGlyphs">618,271</text>
<text x="940.54" y="337.36" font-size="17.6" fill="#262626" textLength="61.20" lengthAdjust="spacingAndGlyphs">633,418</text>
<text x="1027.54" y="337.36" font-size="17.6" fill="#262626" textLength="60.95" lengthAdjust="spacingAndGlyphs">691,264</text>
<text x="1114.54" y="337.36" font-size="17.6" fill="#262626" textLength="61.31" lengthAdjust="spacingAndGlyphs">688,457</text>
<text x="573.2" y="363.98" font-size="17.6" fill="#262626" textLength="35.2" lengthAdjust="spacingAndGlyphs">대구</text>
<text x="679.61" y="363.98" font-size="17.6" fill="#262626" textLength="61.25" lengthAdjust="spacingAndGlyphs">929,087</text>
<text x="766.61" y="363.98" font-size="17.6" fill="#262626" textLength="61.05" lengthAdjust="spacingAndGlyphs">943,170</text>
<text x="853.61" y="363.98" font-size="17.6" fill="#262626" textLength="61.14" lengthAdjust="spacingAndGlyphs">967,206</text>
<text x="940.61" y="363.98" font-size="17.6" fill="#262626" textLength="60.88" lengthAdjust="spacingAndGlyphs">967,934</text>
<text x="1014.32" y="363.98" font-size="17.6" fill="#262626" textLength="74.52" lengthAdjust="spacingAndGlyphs">1,010,557</text>
<text x="1101.33" y="363.98" font-size="17.6" fill="#262626" textLength="74.41" lengthAdjust="spacingAndGlyphs">1,004,563</text>
<text x="573.2" y="390.60" font-size="17.6" fill="#262626" textLength="35.2" lengthAdjust="spacingAndGlyphs">울산</text>
<text x="679.73" y="390.60" font-size="17.6" fill="#262626" textLength="60.77" lengthAdjust="spacingAndGlyphs">523,344</text>
<text x="766.72" y="390.60" font-size="17.6" fill="#262626" textLength="61.13" lengthAdjust="spacingAndGlyphs">521,482</text>
<text x="853.72" y="390.60" font-size="17.6" fill="#262626" textLength="60.98" lengthAdjust="spacingAndGlyphs">527,085</text>
<text x="940.72" y="390.60" font-size="17.6" fill="#262626" textLength="61.13" lengthAdjust="spacingAndGlyphs">533,187</text>
<text x="1027.73" y="390.60" font-size="17.6" fill="#262626" textLength="60.77" lengthAdjust="spacingAndGlyphs">543,424</text>
<text x="1114.72" y="390.60" font-size="17.6" fill="#262626" textLength="61.13" lengthAdjust="spacingAndGlyphs">549,102</text>
<path d="M571.3 263.82H654M571.3 397.52H654M657.6 266.82V394.52" stroke="#7453b5" stroke-width="1.8" fill="none"/>
<path d="M571.3 261.62V266.02M571.3 395.32V399.71999999999997" stroke="#7453b5" stroke-width="2.2" fill="none"/>
<path d="M656.1 241.5V258.5M1178.9 241.5V261M661.5 264.82H1175" stroke="#8f2c38" stroke-width="1.9" fill="none"/>
<path d="M653.7 239.2H659.5M1176.3 239.2H1181.6" stroke="#8f2c38" stroke-width="1.6" fill="none"/>
<path d="M1179.2 267.02V394.02M746.5 397.52H1176" stroke="#3d68b0" stroke-width="1.9" fill="none"/>
<rect x="656.5" y="371.20" width="87.6" height="26.42" fill="none" stroke="#217346" stroke-width="2"/>
<rect x="656.3" y="235.8" width="87.4" height="2.3" fill="#217346"/>
<rect x="568.2" y="370.40" width="2.1" height="26.62" fill="#217346"/>
<rect x="653.8" y="261.12" width="5.7" height="5.4" fill="#7453b5" stroke="#fff" stroke-width="0.6"/>
<rect x="653.9" y="394.62" width="5.9" height="5.4" fill="#7453b5" stroke="#fff" stroke-width="0.6"/>
<rect x="1176.4" y="261.22" width="5.4" height="5.4" fill="#b4373c" stroke="#fff" stroke-width="0.6"/>
<rect x="1176.5" y="393.92" width="5.4" height="5.6" fill="#3d68b0" stroke="#fff" stroke-width="0.6"/>
<rect x="740.8" y="394.32" width="5.6" height="5.4" fill="#217346" stroke="#fff" stroke-width="0.6"/>
<rect x="1437.4" y="214.8" width="17" height="16" fill="#fff" stroke="#a9a9a9" stroke-width="1"/>
<path d="M1441.4 225.2L1445.9 220.6L1450.4 225.2Z" fill="#111"/>
<rect x="1437.6" y="233" width="16.4" height="88.4" fill="#fff" stroke="#a9a9a9" stroke-width="1"/>
<rect x="1437.4" y="445.4" width="17" height="16.8" fill="#fff" stroke="#a9a9a9" stroke-width="1"/>
<path d="M1441.4 451.8L1445.9 456.4L1450.4 451.8Z" fill="#111"/>
<rect x="549.5" y="472.7" width="866" height="17.6" fill="#f0f0f0"/>
<rect x="532.2" y="472.7" width="16.8" height="17.6" fill="#fff" stroke="#a9a9a9" stroke-width="1"/>
<path d="M542.9 477.8L538 481.8L542.9 485.8Z" fill="#111"/>
<rect x="550.3" y="472.7" width="766.2" height="17.6" fill="#fff" stroke="#a9a9a9" stroke-width="1"/>
<rect x="1415.5" y="472.7" width="17" height="17.6" fill="#fff" stroke="#a9a9a9" stroke-width="1"/>
<path d="M1421.6 477.3L1426.6 481.6L1421.6 485.9Z" fill="#111"/>
</g>
<g id="annot">
<g fill="none" stroke="#ff1a1a">
<path d="M662.5 255.8H1174.8A25.5 25.5 0 0 1 1200.3 281.3V383.8A25.5 25.5 0 0 1 1174.8 409.3H662.5A25.5 25.5 0 0 1 637 383.8V281.3A25.5 25.5 0 0 1 662.5 255.8Z" stroke-width="8.8" stroke-opacity="0.09"/>
<path d="M662.5 255.8H1174.8A25.5 25.5 0 0 1 1200.3 281.3V383.8A25.5 25.5 0 0 1 1174.8 409.3H662.5A25.5 25.5 0 0 1 637 383.8V281.3A25.5 25.5 0 0 1 662.5 255.8Z" stroke-width="6.8" stroke-opacity="0.13"/>
<path d="M662.5 255.8H1174.8A25.5 25.5 0 0 1 1200.3 281.3V383.8A25.5 25.5 0 0 1 1174.8 409.3H662.5A25.5 25.5 0 0 1 637 383.8V281.3A25.5 25.5 0 0 1 662.5 255.8Z" stroke-width="5.0" stroke-opacity="0.18"/>
<path d="M662.5 255.8H1174.8A25.5 25.5 0 0 1 1200.3 281.3V383.8A25.5 25.5 0 0 1 1174.8 409.3H662.5A25.5 25.5 0 0 1 637 383.8V281.3A25.5 25.5 0 0 1 662.5 255.8Z" stroke-width="3.4" stroke-opacity="0.25"/>
</g>
<path d="M662.5 255.8H1174.8A25.5 25.5 0 0 1 1200.3 281.3V383.8A25.5 25.5 0 0 1 1174.8 409.3H662.5A25.5 25.5 0 0 1 637 383.8V281.3A25.5 25.5 0 0 1 662.5 255.8Z" fill="none" stroke="#cf0808" stroke-width="1.8"/>
<g fill="none" stroke="#ff1a1a">
<path d="M397 448.8H936.2A50 50 0 0 1 986.2 498.8V729.4A50 50 0 0 1 936.2 779.4H397A50 50 0 0 1 347 729.4V498.8A50 50 0 0 1 397 448.8Z" stroke-width="8.8" stroke-opacity="0.09"/>
<path d="M397 448.8H936.2A50 50 0 0 1 986.2 498.8V729.4A50 50 0 0 1 936.2 779.4H397A50 50 0 0 1 347 729.4V498.8A50 50 0 0 1 397 448.8Z" stroke-width="6.8" stroke-opacity="0.13"/>
<path d="M397 448.8H936.2A50 50 0 0 1 986.2 498.8V729.4A50 50 0 0 1 936.2 779.4H397A50 50 0 0 1 347 729.4V498.8A50 50 0 0 1 397 448.8Z" stroke-width="5.0" stroke-opacity="0.18"/>
<path d="M397 448.8H936.2A50 50 0 0 1 986.2 498.8V729.4A50 50 0 0 1 936.2 779.4H397A50 50 0 0 1 347 729.4V498.8A50 50 0 0 1 397 448.8Z" stroke-width="3.4" stroke-opacity="0.25"/>
</g>
<path d="M397 448.8H936.2A50 50 0 0 1 986.2 498.8V729.4A50 50 0 0 1 936.2 779.4H397A50 50 0 0 1 347 729.4V498.8A50 50 0 0 1 397 448.8Z" fill="none" stroke="#cf0808" stroke-width="1.8"/>
<path d="M1200.7 332.7H1310.2V614.2H992" fill="none" stroke="#dc0b0b" stroke-width="3.9" stroke-dasharray="14.8 11.81"/>
<path d="M1008 604.3L991 614.2L1008 624.4" fill="none" stroke="#dc0b0b" stroke-width="3.8" stroke-linecap="round" stroke-linejoin="miter"/>
</g>
</svg>
</body></html>
